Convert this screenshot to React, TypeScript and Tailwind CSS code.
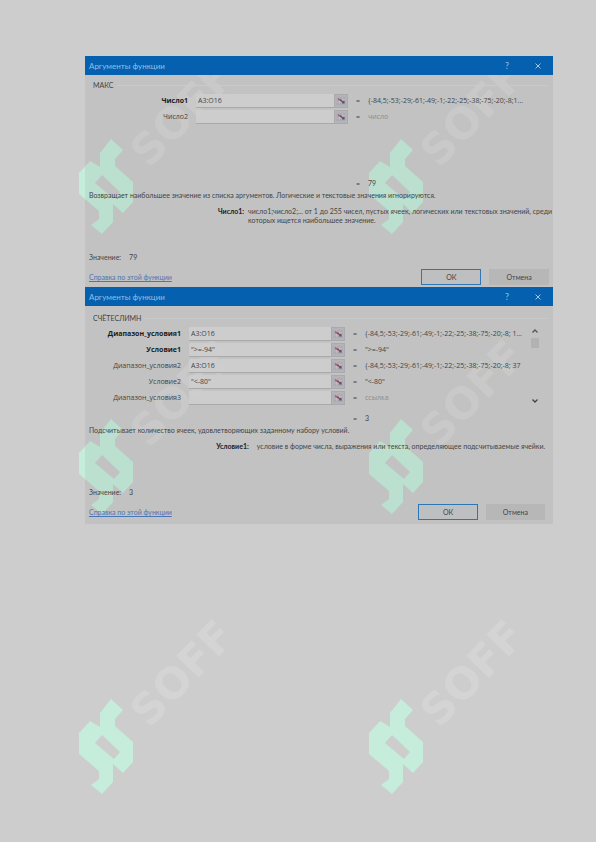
import React from 'react';

interface Argument {
  label: string;
  value: string;
  result: string;
  required?: boolean;
  empty?: boolean;
}

interface DialogProps {
  id: string;
  functionName: string;
  columns: string;
  legendMargin: string;
  args: Argument[];
  argsHeight: string;
  result: string;
  description: string;
  helpLabel: string;
  helpWidth: string;
  helpLines: string[];
  footer: string;
  scrollable?: boolean;
}

const maxArgs: Argument[] = [
  {
    label: 'Число1',
    value: 'A3:O16',
    result: '{-84,5;-53;-29;-61;-49;-1;-22;-25;-38;-75;-20;-8;1...',
    required: true
  },
  { label: 'Число2', value: '', result: 'число', empty: true }
];

const countArgs: Argument[] = [
  {
    label: 'Диапазон_условия1',
    value: 'A3:O16',
    result: '{-84,5;-53;-29;-61;-49;-1;-22;-25;-38;-75;-20;-8; 1...',
    required: true
  },
  { label: 'Условие1', value: '">=-94"', result: '">=-94"', required: true },
  {
    label: 'Диапазон_условия2',
    value: 'A3:O16',
    result: '{-84,5;-53;-29;-61;-49;-1;-22;-25;-38;-75;-20;-8; 37'
  },
  { label: 'Условие2', value: '"<-80"', result: '"<-80"' },
  { label: 'Диапазон_условия3', value: '', result: 'ссылка', empty: true }
];

const RangeIcon: React.FC = () => (
  <svg viewBox="0 0 10 10" className="w-2.5 h-2.5">
    <rect x="0.5" y="1" width="9" height="8" fill="#a9abb3" />
    <path d="M1 3.5h8M1 6h8M3.5 1.5v7M6.5 1.5v7" stroke="#c6c8ce" strokeWidth="0.5" />
    <path d="M2 3l3.5 1.5" stroke="#b8505f" strokeWidth="1.5" />
    <path d="M4.5 4L7.5 6.5M8 5v2H6" stroke="#6d4a66" strokeWidth="1.2" fill="none" />
  </svg>
);

const FunctionDialog: React.FC<DialogProps> = ({
  id,
  functionName,
  columns,
  legendMargin,
  args,
  argsHeight,
  result,
  description,
  helpLabel,
  helpWidth,
  helpLines,
  footer,
  scrollable
}) => (
  <section className="bg-black/5">
    {/* Title bar */}
    <header className="flex items-center h-[19px] pl-1 pr-2.5 bg-[#0561b0] text-[#8fc0e6]">
      <h2 className="flex-1 text-[8px]">Аргументы функции</h2>
      <button type="button" aria-label="Справка" className="w-3 mr-5 text-[9px]">
        ?
      </button>
      <button type="button" aria-label="Закрыть" className="w-2.5 h-3 flex items-center justify-center">
        <svg viewBox="0 0 8 8" className="w-2 h-2">
          <path d="M1.5 1.5l5 5M6.5 1.5l-5 5" stroke="#b4d4ec" strokeWidth="0.9" />
        </svg>
      </button>
    </header>

    {/* Arguments */}
    <div className={`flex items-center h-3 pl-2 pr-1.5 gap-1 ${legendMargin}`}>
      <span>{functionName}</span>
      <span className="flex-1 h-px bg-[#cacaca]" />
    </div>
    <div className={`flex mt-0.5 font-['Open_Sans','Noto_Sans',sans-serif] ${argsHeight}`}>
      <div className="flex-1 min-w-0">
        {args.map((arg) => (
          <div key={arg.label} className={`grid h-4 items-center ${columns}`}>
            <label
              htmlFor={`${id}-${arg.label}`}
              className={`pr-2 text-right whitespace-nowrap ${arg.required ? 'font-bold text-[#1c1c1c]' : ''}`}
            >
              {arg.label}
            </label>
            <div className="flex min-w-0 h-[14px]">
              <input
                id={`${id}-${arg.label}`}
                type="text"
                defaultValue={arg.value}
                className="flex-1 min-w-0 px-0.5 bg-[#d0d0d0]/80 border-b border-[#a9a9a9]"
              />
              <button
                type="button"
                aria-label={`Выбрать ${arg.label}`}
                className="w-[14px] flex items-center justify-center bg-[#b3b4b8] border border-[#a9aaad]"
              >
                <RangeIcon />
              </button>
            </div>
            <div className="flex min-w-0 pl-2 overflow-hidden whitespace-nowrap">
              <span className="w-3 shrink-0">=</span>
              <span className={arg.empty ? 'text-[#8c8c8c]' : ''}>{arg.result}</span>
            </div>
          </div>
        ))}
      </div>
      {scrollable && (
        <div className="flex flex-col items-center w-3 mr-3 pt-0.5 pb-2">
          <svg viewBox="0 0 8 6" className="w-2 h-1.5">
            <path d="M1.5 4.5L4 2l2.5 2.5" stroke="#555" strokeWidth="1.3" fill="none" />
          </svg>
          <div className="w-2 h-2.5 mt-1 bg-[#b2b2b2]" />
          <svg viewBox="0 0 8 6" className="w-2 h-1.5 mt-auto">
            <path d="M1.5 1.5L4 4l2.5-2.5" stroke="#444" strokeWidth="1.3" fill="none" />
          </svg>
        </div>
      )}
    </div>

    {/* Result and description */}
    <div className={`grid h-3 items-center ${scrollable ? 'mr-6' : ''} ${columns}`}>
      <div className="col-start-3 flex pl-2">
        <span className="w-3">=</span>
        <span>{result}</span>
      </div>
    </div>
    <p className="h-3 leading-3 pl-1">{description}</p>
    <div className="flex min-h-[44px] mt-1.5 leading-[9px]">
      <strong className={`shrink-0 text-right text-[#1c1c1c] ${helpWidth}`}>{helpLabel}:</strong>
      <p className="flex-1 whitespace-nowrap">
        {helpLines.map((line) => (
          <span key={line} className="block">
            {line}
          </span>
        ))}
      </p>
    </div>
    <p className="flex gap-2 h-3 leading-3 pl-1">
      <span>Значение:</span>
      <span>{result}</span>
    </p>

    {/* Footer */}
    <footer className={`flex items-center gap-2 pl-1 mt-1.5 ${footer}`}>
      <a href="#help" className="mr-auto text-[#4a76b4] underline">
        Справка по этой функции
      </a>
      <button type="button" className="w-[13%] h-4 border border-[#2f76b5] bg-[#bdbfc1]">
        ОК
      </button>
      <button type="button" className="w-[13%] h-4 bg-[#b7b7b8]">
        Отмена
      </button>
    </footer>
  </section>
);

const Watermark: React.FC = () => (
  <svg viewBox="0 0 180 210" className="w-[180px] h-[210px]">
    <path
      d="M41 99L53 110L45 119V126L63 142V162L53 173L43 164V182L32 194L21 185L29 179V171L9 154V133L20 121L30 127V113ZM32 135L25 143L44 159L50 152Z"
      fill="#c6ecdb"
      fillRule="evenodd"
    />
    <text
      x="79"
      y="129"
      transform="rotate(-46 79 129)"
      fontSize="43"
      fontWeight="700"
      fill="#d5d4d4"
      className="font-['DejaVu_Sans',sans-serif]"
    >
      SOFF
    </text>
  </svg>
);

const App: React.FC = () => {
  return (
    <div className="relative min-h-screen bg-[#cdcdcd] font-[Lato,'Noto_Sans',sans-serif] text-[7px] leading-[10px] text-[#444]">
      {/* Repeated watermark, seen through the dialogs */}
      <div className="absolute inset-0 pt-10 pl-[70px] grid grid-cols-[290px_180px] auto-rows-[280px] content-start overflow-hidden pointer-events-none">
        {[0, 1, 2, 3, 4, 5].map((mark) => (
          <Watermark key={mark} />
        ))}
      </div>

      <main className="relative pt-14 pl-[85px] pr-[43px]">
        <FunctionDialog
          id="max"
          functionName="МАКС"
          columns="grid-cols-[111fr_152fr_205fr]"
          legendMargin="mt-1"
          args={maxArgs}
          argsHeight="min-h-[84px]"
          result="79"
          description="Возвращает наибольшее значение из списка аргументов. Логические и текстовые значения игнорируются."
          helpLabel="Число1"
          helpWidth="w-[34%] mr-1"
          helpLines={[
            'число1;число2;... от 1 до 255 чисел, пустых ячеек, логических или текстовых значений, среди',
            'которых ищется наибольшее значение.'
          ]}
          footer="pb-0.5 pr-1"
        />
        <FunctionDialog
          id="count"
          functionName="СЧЁТЕСЛИМН"
          columns="grid-cols-[104fr_156fr_184fr]"
          legendMargin="mt-1.5"
          args={countArgs}
          argsHeight="min-h-[86px]"
          result="3"
          description="Подсчитывает количество ячеек, удовлетворяющих заданному набору условий."
          helpLabel="Условие1"
          helpWidth="w-[35%] mr-2"
          helpLines={['условие в форме числа, выражения или текста, определяющее подсчитываемые ячейки.']}
          footer="pb-1 pr-2"
          scrollable
        />
      </main>
    </div>
  );
};

export default App;
